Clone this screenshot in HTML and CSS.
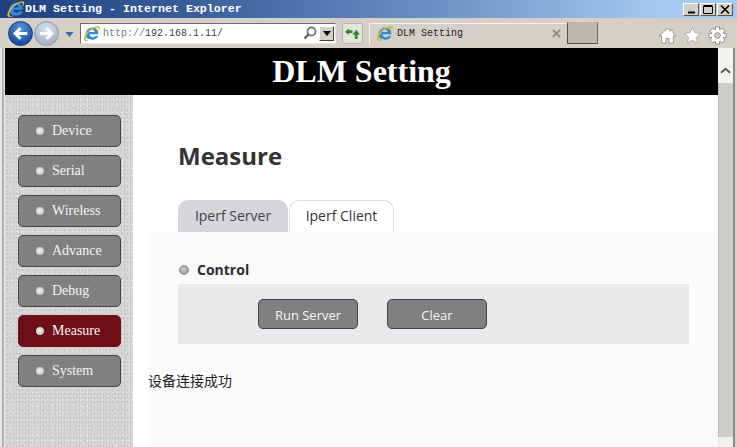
FILE: index.html
```html
<!DOCTYPE html>
<html lang="zh">
<head>
<meta charset="utf-8">
<title>DLM Setting</title>
<link rel="stylesheet" href="styles.css">
</head>
<body>
<svg class="defs" width="0" height="0" aria-hidden="true">
  <symbol id="ie" viewBox="0 0 20 20">
    <path d="M3 11.500C3 6.500 7 3 11 3c4.500 0 7 3 7 7.800H7.600c.2 2.300 1.800 3.500 3.900 3.500 1.600 0 2.700-.7 3.400-1.800h3c-1 3-3.700 4.800-6.600 4.800C6.500 17.300 3 15.500 3 11.500zM7.700 8.300h6c-.2-1.600-1.300-2.600-3-2.600-1.600 0-2.700 1-3 2.600z" fill="#2f8edb"/>
    <path d="M1.300 18C-.2 15 4 7.500 9.700 4.200c4.300-2.400 8.500-3.900 9.800-2.100.8 1.100-.2 3.400-1.600 5.600.3-1.900.5-3.700-.4-4.300-1.500-1-5.500.8-8.500 3.200C4.500 10.500 2 15.200 3.800 17.200c.9.900 2.800.6 4.600-.2-2.200 1.600-5.700 2.700-7.100 1z" fill="#eab52c"/>
  </symbol>
</svg>
<header class="titlebar">
  <svg class="title-logo"><use href="#ie"/></svg>
  <span class="title-text">DLM Setting - Internet Explorer</span>
  <div class="win-controls">
    <span class="win-btn"><svg viewBox="0 0 14 11"><rect x="4" y="7.500" width="7" height="2" fill="#000"/></svg></span>
    <span class="win-btn"><svg viewBox="0 0 14 11"><path d="M2.500 2.500h9v7h-9zM2.500 1.500h9" fill="none" stroke="#000"/></svg></span>
    <span class="win-btn"><svg viewBox="0 0 14 11"><path d="M3 1.500l8 8M11 1.500l-8 8" stroke="#000" stroke-width="1.600" fill="none"/></svg></span>
  </div>
</header>
<nav class="toolbar">
  <span class="round-btn back"><svg viewBox="0 0 24 24"><path d="M19 12H7M12 6.500 6.500 12l5.500 5.500" fill="none" stroke="#fff" stroke-width="3.200"/></svg></span>
  <span class="round-btn forward"><svg viewBox="0 0 24 24"><path d="M5 12h12M12 6.500l5.500 5.500-5.500 5.500" fill="none" stroke="#fff" stroke-width="3.200"/></svg></span>
  <svg class="history" viewBox="0 0 10 6"><path d="M0 0h10L5 6z" fill="#2f6ea8"/></svg>
  <div class="address">
    <svg class="addr-logo"><use href="#ie"/></svg>
    <span class="url"><span class="url-dim">http://</span>192.168.1.11/</span>
    <svg class="search" viewBox="0 0 14 14"><circle cx="8.500" cy="5.500" r="4" fill="none" stroke="#777" stroke-width="1.800"/><path d="M5.500 8.500 1.500 12.500" stroke="#555" stroke-width="2.200"/></svg>
    <span class="drop"><svg viewBox="0 0 8 5"><path d="M0 0h8L4 5z" fill="#000"/></svg></span>
  </div>
  <span class="refresh"><svg viewBox="0 0 16 14"><path d="M0 5l4-3.500V3.500h4v3H4v2z" fill="#2b8a2b"/><path d="M12 3l4 5h-2.500v5h-3V8H8z" fill="#2b8a2b"/></svg></span>
  <div class="tab-strip">
    <svg class="tab-logo"><use href="#ie"/></svg>
    <span class="tab-title">DLM Setting</span>
    <svg class="tab-close" viewBox="0 0 10 10"><path d="M1 1l8 8M9 1 1 9" stroke="#8a8a8a" stroke-width="2.200"/></svg>
  </div>
  <span class="new-tab"></span>
  <div class="tools">
    <svg viewBox="0 0 20 20"><path d="M10 2.500 1 10.500h2.800V18h4.700v-5h3v5h4.700v-7.500H19l-3-2.700V4h-2.500v1.600z" fill="#fff" stroke="#8d8a84" stroke-width=".9"/></svg>
    <svg viewBox="0 0 20 20"><path d="m10 1.500 2.600 5.600 6 .7-4.500 4.100 1.200 6L10 15l-5.300 3 1.200-6L1.400 7.800l6-.7z" fill="#fff" stroke="#a5a29c" stroke-width=".8"/></svg>
    <svg viewBox="0 0 20 20">
      <g fill="#fff" stroke="#8d8a84" stroke-width=".9">
        <rect x="7.800" y="1" width="4.400" height="18"/>
        <rect x="1" y="7.800" width="18" height="4.400"/>
        <rect x="7.800" y="1" width="4.400" height="18" transform="rotate(45 10 10)"/>
        <rect x="1" y="7.800" width="18" height="4.400" transform="rotate(45 10 10)"/>
      </g>
      <circle cx="10" cy="10" r="6.200" fill="#fff"/>
      <circle cx="10" cy="10" r="3" fill="#d4d0c8" stroke="#8d8a84"/>
    </svg>
  </div>
</nav>
<div class="viewport">
  <div class="page">
    <div class="banner">DLM Setting</div>
    <div class="columns">
      <aside class="sidebar">
        <a class="nav-item"><i class="nav-dot"></i>Device</a>
        <a class="nav-item"><i class="nav-dot"></i>Serial</a>
        <a class="nav-item"><i class="nav-dot"></i>Wireless</a>
        <a class="nav-item"><i class="nav-dot"></i>Advance</a>
        <a class="nav-item"><i class="nav-dot"></i>Debug</a>
        <a class="nav-item active"><i class="nav-dot"></i>Measure</a>
        <a class="nav-item"><i class="nav-dot"></i>System</a>
      </aside>
      <main class="main">
        <div class="heading-area">
          <h1 class="page-title">Measure</h1>
          <div class="tabs">
            <span class="tab">Iperf Server</span>
            <span class="tab current">Iperf Client</span>
          </div>
        </div>
        <section class="panel">
          <h2 class="section-title"><i class="section-dot"></i>Control</h2>
          <div class="controls">
            <button class="action">Run Server</button>
            <button class="action">Clear</button>
          </div>
          <p class="status">设备连接成功</p>
        </section>
      </main>
    </div>
  </div>
  <div class="scrollbar">
    <span class="scroll-up"><svg viewBox="0 0 14 10"><path d="M2 7.500 7 3l5 4.500" fill="none" stroke="#555" stroke-width="2"/></svg></span>
    <span class="scroll-track"></span>
    <span class="scroll-down"></span>
  </div>
</div>
</body>
</html>
```
FILE: styles.css
```css
* { box-sizing: border-box; }
html, body { margin: 0; height: 100%; overflow: hidden; }
body {
  width: 737px;
  height: 447px;
  display: flex;
  flex-direction: column;
  background: #d4d0c8;
  font-family: "Open Sans", "Noto Sans", sans-serif;
}
.defs { display: block; height: 0; }

.titlebar {
  height: 18px;
  display: flex;
  align-items: center;
  background: linear-gradient(90deg, #1f3f80 0%, #3f639f 30%, #6d93c6 60%, #a6caf0 90%);
  padding-left: 6px;
}
.title-logo { width: 19px; height: 18px; flex: none; }
.title-text {
  font: bold 11.67px "Liberation Mono", monospace;
  color: #fff;
}
.win-controls { margin-left: auto; display: flex; gap: 1px; padding-right: 4px; margin-top: 1px; }
.win-btn {
  width: 16px;
  height: 13px;
  background: #d4d0c8;
  border: 1px solid;
  border-color: #fff #555 #555 #fff;
  display: block;
}
.win-btn svg { display: block; width: 14px; height: 11px; }

.toolbar {
  height: 30px;
  display: flex;
  align-items: center;
  padding-left: 8px;
  background: #d4d0c8;
}
.round-btn {
  width: 25px;
  height: 25px;
  border-radius: 50%;
  display: block;
  flex: none;
  margin-right: 1px;
}
.round-btn svg { display: block; width: 23px; height: 23px; }
.back {
  background: radial-gradient(circle at 50% 30%, #5c97e0, #1c4f9e 75%);
  border: 1px solid #123a78;
}
.forward {
  background: radial-gradient(circle at 50% 30%, #dbe3ee, #a5b4c9 75%);
  border: 1px solid #8b98ab;
}
.history { width: 9px; height: 5px; margin: 2px 0 0 5px; flex: none; }
.address {
  width: 256px;
  height: 21px;
  margin-left: 6px;
  display: flex;
  align-items: center;
  background: #fff;
  border: 1px solid;
  border-color: #6f6d68 #e8e6e0 #e8e6e0 #6f6d68;
}
.addr-logo { width: 17px; height: 17px; margin-left: 2px; flex: none; }
.url { font: 10px "Liberation Mono", monospace; margin-left: 3px; color: #404040; white-space: nowrap; }
.url-dim { color: #7a7a7a; }
.search { width: 14px; height: 14px; margin-left: auto; flex: none; }
.drop {
  width: 15px;
  height: 15px;
  margin: 0 1px 0 2px;
  background: #d4d0c8;
  border: 1px solid;
  border-color: #fff #444 #444 #fff;
  display: flex;
  align-items: center;
  justify-content: center;
}
.drop svg { width: 8px; height: 5px; }
.refresh {
  width: 21px;
  height: 21px;
  margin-left: 6px;
  border: 1px solid #b5b2ab;
  border-radius: 2px;
  background: #e6e3dd;
  display: flex;
  align-items: center;
  justify-content: center;
}
.refresh svg { width: 15px; height: 13px; }
.tab-strip {
  width: 198px;
  height: 21px;
  margin-left: 6px;
  padding: 0 6px;
  display: flex;
  align-items: center;
  border-top: 1px solid #f4f3ef;
  border-left: 1px solid #f4f3ef;
}
.tab-logo { width: 17px; height: 17px; flex: none; }
.tab-title { font: 10px "Liberation Mono", monospace; color: #222; margin-left: 4px; white-space: nowrap; }
.tab-close { width: 9px; height: 9px; margin-left: auto; flex: none; }
.new-tab {
  width: 31px;
  height: 22px;
  background: #bcb8b0;
  border: 1px solid;
  border-color: #bcb8b0 #6f6d68 #55534f #55534f;
  flex: none;
}
.tools { margin-left: auto; display: flex; gap: 6px; padding-right: 10px; margin-top: 4px; }
.tools svg { width: 19px; height: 19px; display: block; }

.viewport {
  flex: 1;
  min-height: 0;
  display: flex;
  padding: 0 4px 0 5px;
  background: linear-gradient(90deg, #e9e7e2 0 2px, #b4b4b0 2px 4px, #ecebe7 4px 5px, #d4d0c8 5px 733px, #8c8c88 733px 735px, #d4d0c8 735px);
}
.page { width: 713px; display: flex; flex-direction: column; background: #fff; }
.banner {
  height: 47px;
  background: #000;
  color: #fff;
  font: bold 32px/47px "Liberation Serif", serif;
  text-align: center;
}
.columns { flex: 1; min-height: 0; display: flex; }
.sidebar {
  width: 128px;
  padding: 20px 0 0 13px;
  display: flex;
  flex-direction: column;
  gap: 8px;
  background-color: #d5d5d5;
  background-image:
    radial-gradient(circle, #f1f1f1 0.6px, transparent 1px),
    radial-gradient(circle, #ebebeb 0.6px, transparent 1px),
    radial-gradient(circle, #c3c3c3 0.6px, transparent 1px);
  background-size: 5px 7px, 7px 5px, 3px 4px;
  background-position: 0 0, 2px 3px, 1px 1px;
}
.nav-item {
  width: 103px;
  height: 32px;
  display: flex;
  align-items: center;
  padding-left: 17px;
  border: 1px solid #3c4450;
  border-radius: 5px;
  background: #808080;
  color: #f4f4f4;
  font: 14px "Liberation Serif", serif;
}
.nav-item.active { background: #6e0f18; border-color: #6e0f18; }
.nav-dot {
  width: 8px;
  height: 8px;
  border-radius: 50%;
  margin-right: 8px;
  background: radial-gradient(circle at 45% 45%, #f2f2f2, #b5b5b5);
  flex: none;
}
.main { flex: 1; min-width: 0; display: flex; flex-direction: column; }
.heading-area { height: 137px; padding-left: 45px; display: flex; flex-direction: column; }
.page-title {
  margin: 43px 0 0;
  height: 35px;
  font-size: 24px;
  line-height: 35px;
  font-weight: 700;
  color: #333;
}
.tabs { display: flex; gap: 1px; margin-top: 27px; }
.tab {
  width: 110px;
  height: 32px;
  background: #d5d5da;
  border-radius: 10px 10px 0 0;
  color: #444;
  font-size: 14px;
  line-height: 32px;
  text-align: center;
}
.tab.current {
  width: 105px;
  background: #fff;
  border: 1px solid #dcdcdf;
  border-bottom: 0;
  line-height: 30px;
  color: #333;
}
.panel { flex: 1; background: #fafafa; margin-left: 15px; padding-top: 26px; }
.section-title {
  margin: 0 0 0 31px;
  height: 23px;
  display: flex;
  align-items: center;
  font-size: 14px;
  font-weight: 700;
  color: #2d2d2d;
}
.section-dot {
  width: 10px;
  height: 10px;
  border-radius: 50%;
  background: radial-gradient(circle at 45% 40%, #d0d0d0, #888);
  border: 1px solid #8a8a8a;
  margin-right: 8px;
  flex: none;
}
.controls {
  width: 511px;
  height: 60px;
  margin: 3px 0 0 30px;
  padding-left: 80px;
  display: flex;
  align-items: center;
  gap: 29px;
  background: #e9e9eb;
}
.action {
  width: 100px;
  height: 30px;
  padding: 1px 0 0;
  border: 1px solid #3c4450;
  border-radius: 5px;
  background: #808080;
  color: #f4f4f4;
  font: 13px "Open Sans", "Noto Sans", sans-serif;
}
.status {
  margin: 26px 0 0;
  font: 14px/20px "Noto Sans CJK SC", sans-serif;
  color: #222;
}
.scrollbar { width: 15px; display: flex; flex-direction: column; background: #cdcdc9; }
.scroll-up { height: 35px; padding: 9px 1px 0 0; background: #f2f2f0; display: flex; align-items: center; justify-content: center; }
.scroll-up svg { width: 13px; height: 9px; }
.scroll-track { flex: 1; background: #cdcdc9; border-left: 1px solid #b9b9b5; }
.scroll-down { height: 10px; background: #f0f0ee; }
```
